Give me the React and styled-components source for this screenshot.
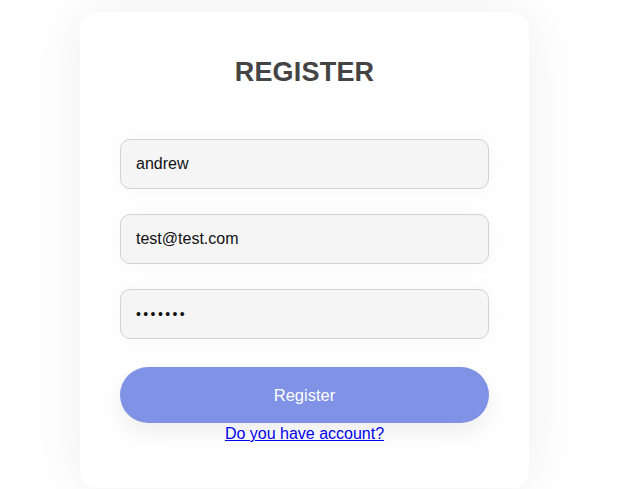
import React, { useState } from "react";
import styled, { createGlobalStyle } from "styled-components";

const GlobalStyle = createGlobalStyle`
  html, body {
    margin: 0;
    padding: 0;
    background: #ffffff;
  }
  body {
    font-family: "Liberation Sans", Arial, Helvetica, sans-serif;
  }
`;

const Page = styled.div`
  display: flex;
  align-items: flex-start;
  min-height: 489px;
  padding: 12px 0 0 80px;
  box-sizing: border-box;
  overflow: hidden;
`;

const Card = styled.form`
  width: 449px;
  box-sizing: border-box;
  display: flex;
  flex-direction: column;
  align-items: center;
  padding: 44px 40px 45px;
  background: #ffffff;
  border-radius: 18px;
  box-shadow: 0 0 60px rgba(0, 0, 0, 0.07);
`;

const Title = styled.h2`
  margin: 0 0 51px;
  font-size: 27px;
  line-height: 32px;
  font-weight: bold;
  color: #444444;
  letter-spacing: 0.2px;
`;

const Fields = styled.div`
  width: 100%;
  display: flex;
  flex-direction: column;
  gap: 25px;
`;

const Input = styled.input`
  width: 100%;
  height: 50px;
  box-sizing: border-box;
  padding: 0 15px;
  border: 1px solid #d2d2d2;
  border-radius: 10px;
  background: #f5f5f5;
  font-family: "Liberation Sans", Arial, sans-serif;
  font-size: ${(p) => (p.type === "password" ? "14px" : "16px")};
  letter-spacing: ${(p) => (p.type === "password" ? "2.4px" : "0")};
  color: #111111;
  outline: none;
  box-shadow: 0 0 22px rgba(0, 0, 0, 0.04);
`;

const Button = styled.button`
  width: 100%;
  height: 56px;
  margin-top: 28px;
  border: none;
  border-radius: 28px;
  background: #7f92e6;
  color: #ffffff;
  font-family: "Liberation Sans", Arial, sans-serif;
  font-size: 16.5px;
  cursor: pointer;
  box-shadow: 0 10px 24px rgba(0, 0, 0, 0.07);
`;

const Link = styled.a`
  margin-top: 2px;
  font-size: 16px;
  line-height: 18px;
  color: #0000ee;
  text-decoration: underline;
`;

export default function App() {
  const [name, setName] = useState("andrew");
  const [email, setEmail] = useState("test@test.com");
  const [password, setPassword] = useState("1234567");

  return (
    <>
      <GlobalStyle />
      <Page>
        <Card onSubmit={(e) => e.preventDefault()}>
          <Title>REGISTER</Title>
          <Fields>
            <Input value={name} onChange={(e) => setName(e.target.value)} />
            <Input value={email} onChange={(e) => setEmail(e.target.value)} />
            <Input
              type="password"
              value={password}
              onChange={(e) => setPassword(e.target.value)}
            />
          </Fields>
          <Button type="submit">Register</Button>
          <Link href="#">Do you have account?</Link>
        </Card>
      </Page>
    </>
  );
}
